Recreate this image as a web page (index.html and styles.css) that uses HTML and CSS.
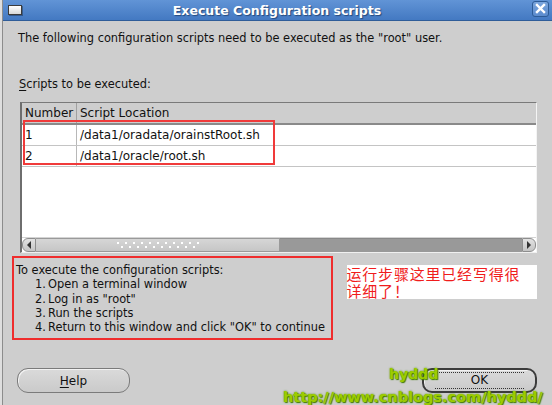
FILE: index.html
```html
<!DOCTYPE html>
<html lang="en">
<head>
    <meta charset="UTF-8">
    <title>Execute Configuration scripts</title>
    <link rel="stylesheet" href="styles.css">
</head>
<body>

    <div class="window">
        <!-- Title bar -->
        <div class="titlebar">
            <span class="win-icon"></span>
            <span class="title">Execute Configuration scripts</span>
            <span class="close-btn">
                <svg width="11" height="11" viewBox="0 0 11 11">
                    <path d="M2 2 L9 9 M9 2 L2 9" stroke="#fff" stroke-width="2.4" stroke-linecap="square"/>
                </svg>
            </span>
        </div>

        <div class="content">
            <p class="intro">The following configuration scripts need to be executed as the "root" user.</p>
            <p class="label"><u>S</u>cripts to be executed:</p>

            <!-- Scripts table -->
            <div class="table-panel">
                <div class="table-head">
                    <div class="col-num">Number</div>
                    <div class="col-loc">Script Location</div>
                </div>
                <div class="table-row">
                    <div class="col-num">1</div>
                    <div class="col-loc">/data1/oradata/orainstRoot.sh</div>
                </div>
                <div class="table-row">
                    <div class="col-num">2</div>
                    <div class="col-loc">/data1/oracle/root.sh</div>
                </div>
                <div class="table-empty"></div>
                <div class="hscroll">
                    <div class="arrow-btn left">
                        <svg width="6" height="8" viewBox="0 0 6 8"><path d="M5 0 L5 8 L1 4 Z" fill="#333"/></svg>
                    </div>
                    <div class="thumb"><span class="grip"></span></div>
                    <div class="track"></div>
                    <div class="arrow-btn right">
                        <svg width="6" height="8" viewBox="0 0 6 8"><path d="M1 0 L1 8 L5 4 Z" fill="#333"/></svg>
                    </div>
                </div>
                <div class="mark-box"></div>
            </div>

            <!-- Instructions -->
            <div class="info-row">
                <div class="steps">
                    <div>To execute the configuration scripts:</div>
                    <div class="step"><span class="num">1.</span>Open a terminal window</div>
                    <div class="step"><span class="num">2.</span>Log in as "root"</div>
                    <div class="step"><span class="num">3.</span>Run the scripts</div>
                    <div class="step"><span class="num">4.</span>Return to this window and click "OK" to continue</div>
                </div>
                <div class="note">
                    <div class="note-line">运行步骤这里已经写得很</div>
                    <div class="note-line">详细了！</div>
                </div>
            </div>

            <div class="buttons">
                <button class="btn"><u>H</u>elp</button>
                <button class="btn btn-default"><span class="focus">OK</span></button>
            </div>
        </div>

        <div class="watermark">
            <span class="wm-name">hyddd</span>
            <span class="wm-url">http://www.cnblogs.com/hyddd/</span>
        </div>
    </div>

</body>
</html>
```

FILE: styles.css
```css
body {
    margin: 0;
    padding: 0;
    background-color: #dedede;
    font-family: 'DejaVu Sans', sans-serif;
    color: #111;
}

.window {
    position: relative;
    margin-left: 2px;
    width: 550px;
    height: 405px;
    box-sizing: border-box;
    border-left: 1px solid #8c8c8c;
    background-color: #cecece;
    overflow: hidden;
}

/* title bar */
.titlebar {
    display: flex;
    align-items: center;
    height: 20px;
    background: linear-gradient(#6194d6, #4379c2);
    border-bottom: 1px solid #2f5d99;
}

.win-icon {
    width: 12px;
    height: 8px;
    margin-left: 5px;
    background: linear-gradient(#ffffff, #d8d8d8);
    border: 1px solid #3b3b3b;
    box-shadow: 1px 1px 0 rgba(0, 0, 0, 0.3);
}

.title {
    flex: 1;
    text-align: center;
    color: #fff;
    font-weight: bold;
    font-size: 12.5px;
    text-shadow: 1px 1px 1px #24497c;
}

.close-btn {
    display: flex;
    justify-content: center;
    align-items: center;
    width: 15px;
    height: 14px;
    margin-right: 3px;
    margin-bottom: 3px;
    border: 1px solid #2d5b96;
    border-radius: 3px;
    background: linear-gradient(#7aa5dd, #5b8bcd);
}

/* content */
.content {
    padding: 10px 15px 0 13px;
    font-size: 11.4px;
}

.intro {
    margin: 0;
    line-height: 14px;
    padding-left: 2px;
}

.label {
    margin: 32px 0 0 0;
    line-height: 14px;
    padding-left: 3px;
}

.label u, .btn u {
    text-decoration-thickness: 1px;
    text-underline-offset: 2px;
}

/* table */
.table-panel {
    position: relative;
    margin: 11px 0 0 4px;
    border-top: 1px solid #7a7a7a;
    border-left: 2px solid #6e6e6e;
    border-right: 1px solid #f4f4f4;
    border-bottom: 1px solid #f0f0f0;
    font-size: 12px;
}

.table-head, .table-row {
    display: flex;
}

.table-head {
    height: 20px;
    line-height: 20px;
    border-bottom: 2px solid #8a8a8a;
    background-color: #cecece;
}

.table-row {
    height: 20px;
    line-height: 21px;
    background-color: #fff;
    border-bottom: 1px solid #c4c4c4;
}

.col-num {
    width: 51px;
    padding-left: 3px;
    border-right: 1px solid #b8b8b8;
}

.table-head .col-num {
    border-right: 1px solid #a0a0a0;
}

.col-loc {
    padding-left: 3px;
}

.table-empty {
    height: 70px;
    background-color: #fff;
}

.hscroll {
    display: flex;
    height: 14px;
    border-top: 1px solid #d4d4d4;
    background-color: #fff;
}

.arrow-btn {
    display: flex;
    justify-content: center;
    align-items: center;
    width: 14px;
    background: linear-gradient(#e2e2e2, #c4c4c4);
    border: 1px solid #8e8e8e;
    box-sizing: border-box;
}

.arrow-btn.left {
    border-radius: 6px 0 0 6px;
}

.arrow-btn.right {
    border-radius: 0 6px 6px 0;
}

.thumb {
    display: flex;
    justify-content: center;
    align-items: center;
    width: 244px;
    background: linear-gradient(#d6d6d6, #c6c6c6);
    border: 1px solid #9a9a9a;
    border-left: 0;
    box-sizing: border-box;
}

.grip {
    width: 84px;
    height: 8px;
    background-image:
        radial-gradient(circle at 2px 2px, #fff 1.1px, transparent 1.4px),
        radial-gradient(circle at 6px 6px, #fff 1.1px, transparent 1.4px);
    background-size: 8px 8px;
}

.track {
    flex: 1;
    background-color: #999;
    border-top: 1px solid #888;
}

.mark-box {
    position: absolute;
    left: 1px;
    top: 17px;
    width: 252px;
    height: 45px;
    box-sizing: border-box;
    border: 2px solid #f03a3a;
}

/* instructions */
.info-row {
    display: flex;
    margin-top: 3px;
}

.steps {
    width: 323px;
    height: 84px;
    box-sizing: border-box;
    margin-left: -4px;
    padding: 5px 0 0 2px;
    border: 2px solid #ef2d2d;
    line-height: 14.3px;
    font-size: 11.4px;
}

.step {
    padding-left: 19px;
}

.num {
    display: inline-block;
    width: 13px;
}

.note {
    margin: 9px 0 0 14px;
    width: 192px;
    height: 34px;
    background-color: #fff;
    color: #f01c1c;
    font-family: 'Noto Sans CJK SC', sans-serif;
    font-size: 15px;
    letter-spacing: 0.8px;
}

.note-line {
    height: 17px;
    line-height: 17px;
}

/* buttons */
.buttons {
    display: flex;
    justify-content: space-between;
    margin-top: 28px;
    padding-left: 1px;
}

.btn {
    width: 113px;
    height: 25px;
    border: 1px solid #7b7b7b;
    border-radius: 11px;
    background: linear-gradient(#dadada, #cacaca);
    box-shadow: inset 1px 1px 0 #f2f2f2;
    font-family: 'DejaVu Sans', sans-serif;
    font-size: 12px;
    color: #111;
    padding: 0;
}

.btn-default {
    width: 115px;
    border: 2px solid #3c3c3c;
    border-radius: 10px;
    display: flex;
    justify-content: center;
    align-items: center;
}

.focus {
    display: block;
    width: 89px;
    height: 15px;
    line-height: 15px;
    border-top: 1px dotted #333;
    border-bottom: 1px dotted #333;
}

/* watermark */
.watermark {
    position: absolute;
    left: 0;
    top: 0;
    width: 100%;
    height: 100%;
    pointer-events: none;
    font-family: 'DejaVu Sans', sans-serif;
    font-weight: bold;
    color: #9ccc00;
    text-shadow: 0 0 2px #4d8a00, 1px 1px 1px #3f7a00;
}

.wm-name {
    position: absolute;
    left: 386px;
    top: 366px;
    font-size: 14px;
}

.wm-url {
    position: absolute;
    left: 280px;
    top: 389px;
    font-size: 14.5px;
}
```
